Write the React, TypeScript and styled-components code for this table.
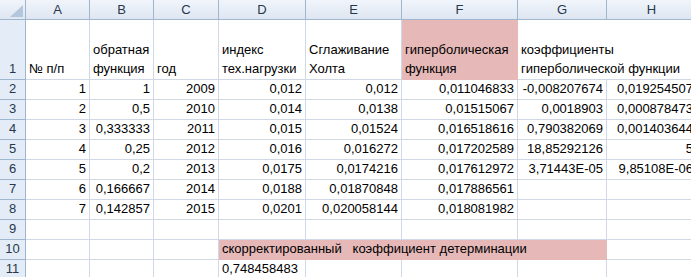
import * as React from "react";
import styled, { createGlobalStyle } from "styled-components";

type Align = "left" | "right";

type CellData = {
  v?: string;
  align?: Align;
  fill?: boolean;
  span?: number;
};

const COLUMNS = ["A", "B", "C", "D", "E", "F", "G", "H"];

const r = (v: string): CellData => ({ v, align: "right" });
const l = (v: string): CellData => ({ v, align: "left" });
const empty: CellData = {};

const ROWS: CellData[][] = [
  [
    l("№ п/п"),
    l("обратная\nфункция"),
    l("год"),
    l("индекс\nтех.нагрузки"),
    l("Сглаживание\nХолта"),
    { v: "гиперболическая\nфункция", align: "left", fill: true },
    { v: "коэффициенты\nгиперболической функции", align: "left", span: 2 },
  ],
  [r("1"), r("1"), r("2009"), r("0,012"), r("0,012"), r("0,011046833"), r("-0,008207674"), r("0,019254507")],
  [r("2"), r("0,5"), r("2010"), r("0,014"), r("0,0138"), r("0,01515067"), r("0,0018903"), r("0,000878473")],
  [r("3"), r("0,333333"), r("2011"), r("0,015"), r("0,01524"), r("0,016518616"), r("0,790382069"), r("0,001403644")],
  [r("4"), r("0,25"), r("2012"), r("0,016"), r("0,016272"), r("0,017202589"), r("18,85292126"), r("5")],
  [r("5"), r("0,2"), r("2013"), r("0,0175"), r("0,0174216"), r("0,017612972"), r("3,71443E-05"), r("9,85108E-06")],
  [r("6"), r("0,166667"), r("2014"), r("0,0188"), r("0,01870848"), r("0,017886561"), empty, empty],
  [r("7"), r("0,142857"), r("2015"), r("0,0201"), r("0,020058144"), r("0,018081982"), empty, empty],
  [empty, empty, empty, empty, empty, empty, empty, empty],
  [
    empty,
    empty,
    empty,
    { v: "скорректированный   коэффициент детерминации", align: "left", fill: true, span: 4 },
    empty,
  ],
  [empty, empty, empty, l("0,748458483"), empty, empty, empty, empty],
];

const GlobalStyle = createGlobalStyle`
  body {
    margin: 0;
    background: #ffffff;
    overflow: hidden;
  }
`;

const Sheet = styled.div`
  display: grid;
  grid-template-columns: 26px 64px 64px 65px 87px 96px 116px 89px 90px;
  grid-template-rows: 20px 60px repeat(10, 20px);
  width: max-content;
  font-family: "Liberation Sans", Arial, sans-serif;
  font-size: 13px;
  color: #000000;
`;

const HeaderCell = styled.div`
  box-sizing: border-box;
  display: flex;
  align-items: center;
  justify-content: center;
  border-right: 1px solid #9eb6ce;
  border-bottom: 1px solid #9eb6ce;
  background: linear-gradient(#f1f5fb, #dee6f1);
  color: #27384c;
  font-size: 13px;
`;

const Corner = styled(HeaderCell)`
  align-items: flex-end;
  justify-content: flex-end;
  padding: 0 2px 2px 0;
`;

const RowHeader = styled.div`
  box-sizing: border-box;
  display: flex;
  align-items: flex-end;
  justify-content: center;
  padding-bottom: 1px;
  line-height: 18px;
  border-right: 1px solid #9eb6ce;
  border-bottom: 1px solid #9eb6ce;
  background: #e4ecf7;
  color: #27384c;
`;

const Cell = styled.div<{ $align?: Align; $fill?: boolean; $span?: number }>`
  box-sizing: border-box;
  grid-column: span ${(p) => p.$span ?? 1};
  display: flex;
  align-items: flex-end;
  justify-content: ${(p) => (p.$align === "right" ? "flex-end" : "flex-start")};
  padding: 0 3px 1px 3px;
  line-height: 19px;
  white-space: pre;
  overflow: visible;
  background: ${(p) => (p.$fill ? "#e6b9b8" : "#ffffff")};
  border-right: 1px solid ${(p) => (p.$fill ? "#e6b9b8" : "#d0d7e5")};
  border-bottom: 1px solid ${(p) => (p.$fill ? "#e6b9b8" : "#d0d7e5")};
`;

function SelectAll() {
  return (
    <svg width="13" height="12" viewBox="0 0 13 12">
      <polygon points="13,0 13,12 0,12" fill="#b4c6dc" />
    </svg>
  );
}

export default function App() {
  return (
    <>
      <GlobalStyle />
      <Sheet>
        <Corner>
          <SelectAll />
        </Corner>
        {COLUMNS.map((c) => (
          <HeaderCell key={c}>{c}</HeaderCell>
        ))}
        {ROWS.map((row, i) => (
          <React.Fragment key={i}>
            <RowHeader>{i + 1}</RowHeader>
            {row.map((cell, j) => (
              <Cell key={j} $align={cell.align} $fill={cell.fill} $span={cell.span}>
                {cell.v}
              </Cell>
            ))}
          </React.Fragment>
        ))}
      </Sheet>
    </>
  );
}
